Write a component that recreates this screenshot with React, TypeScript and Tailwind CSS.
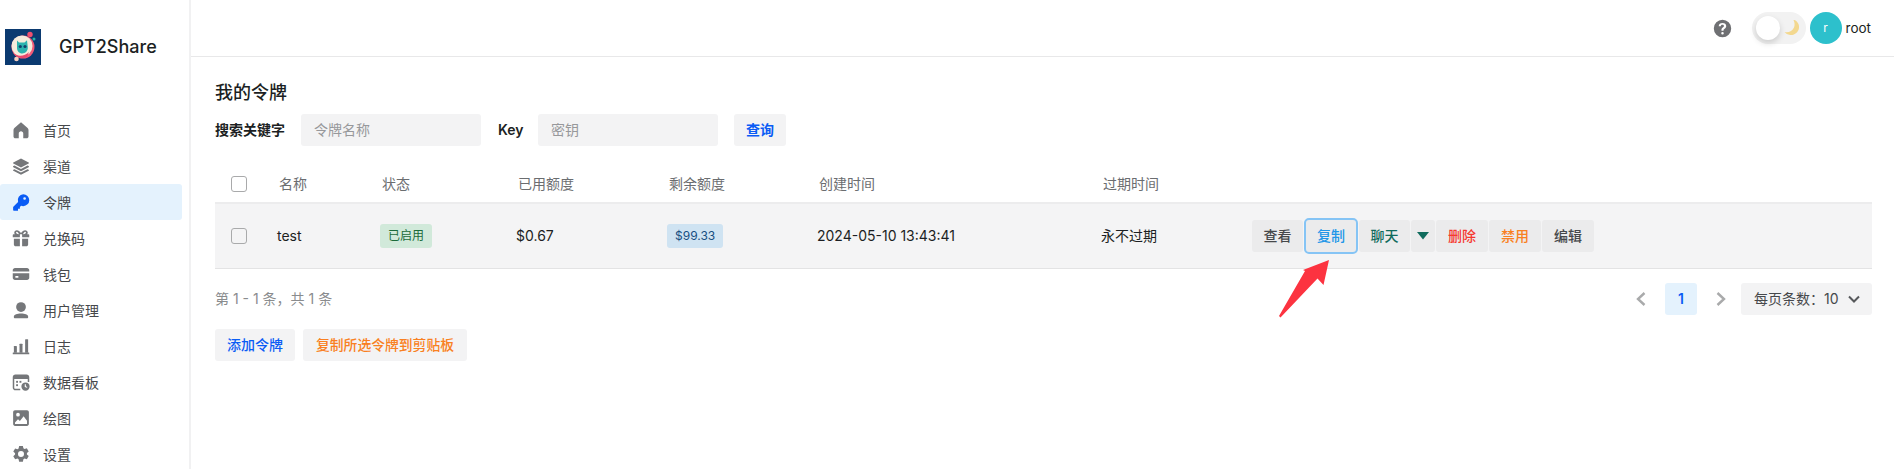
import React from "react";

function Icon({ children, size = 20, cls = "text-[#75777a]" }: { children: React.ReactNode; size?: number; cls?: string }) {
  return (
    <svg width={size} height={size} viewBox="0 0 24 24" fill="currentColor" className={`shrink-0 ${cls}`}>
      {children}
    </svg>
  );
}

const nav: { label: string; icon: React.ReactNode; active?: boolean }[] = [
  { label: "首页", icon: <path d="M12 1.500 3.200 9.400C2.400 10.100 2 11 2 12v8.500C2 21.900 3.100 23 4.500 23H9v-6.500c0-1.700 1.300-3 3-3s3 1.300 3 3V23h4.500c1.400 0 2.500-1.100 2.500-2.500V12c0-1-.4-1.900-1.200-2.600L12 1.500z" /> },
  { label: "渠道", icon: <><path d="M12 2 1.800 7.200c-.6.3-.6 1.100 0 1.400L12 14l10.200-5.400c.6-.3.6-1.100 0-1.400L12 2z" /><path d="m3.300 11.300-1.500.8c-.6.3-.6 1.100 0 1.400L12 19l10.200-5.500c.6-.3.6-1.100 0-1.400l-1.500-.8L12 16l-8.700-4.700z" /><path d="m3.300 16.200-1.500.8c-.6.3-.6 1.100 0 1.400L12 23.500l10.200-5.100c.6-.3.6-1.100 0-1.400l-1.500-.8-8.700 4.500-8.700-4.500z" /></> },
  { label: "令牌", active: true, icon: <path fillRule="evenodd" d="M15 1.500a8 8 0 0 1 0 16c-1 0-2-.2-2.900-.5L10.500 18.600V21H8v2.500H2.500c-.6 0-1-.4-1-1v-3.600c0-.3.1-.5.3-.7l6.300-6.300A8 8 0 0 1 15 1.500zm1.800 4a1.800 1.800 0 1 0 0 3.600 1.800 1.800 0 0 0 0-3.600z" /> },
  { label: "兑换码", icon: <><path fillRule="evenodd" d="M6.500 1.500c1.900 0 4 1.500 5.500 3.700 1.500-2.200 3.600-3.700 5.500-3.700C19.500 1.500 21 3 21 4.800c0 .8-.3 1.600-.7 2.200H22c.6 0 1 .4 1 1v3h-9.500V7h-3v4H1V8c0-.6.4-1 1-1h1.700c-.4-.6-.7-1.400-.7-2.200C3 3 4.500 1.500 6.500 1.500zm0 2.300c-.6 0-1.100.4-1.100 1 0 .8.700 2.200 4 2.200-1-2-2-3.200-2.900-3.200zm11 0c-.9 0-1.900 1.200-2.900 3.200 3.300 0 4-1.400 4-2.200 0-.6-.5-1-1.100-1z" /><path d="M2.500 13h8v10H5c-1.400 0-2.500-1.100-2.500-2.500V13zm11 0h8v7.500c0 1.400-1.100 2.500-2.500 2.500h-5.500V13z" /></> },
  { label: "钱包", icon: <path fillRule="evenodd" d="M4 4h16c1.700 0 3 1.300 3 3v1.500H1V7c0-1.700 1.300-3 3-3zM1 11h22v6c0 1.700-1.300 3-3 3H4c-1.700 0-3-1.300-3-3v-6zm3.500 3.500v2.500h4v-2.500h-4z" /> },
  { label: "用户管理", icon: <><circle cx="12" cy="8" r="6.500" /><path d="M2.500 20.500c0-2.500 4.500-4 9.500-4s9.500 1.500 9.500 4V22c0 .6-.4 1-1 1h-17c-.6 0-1-.4-1-1v-1.500z" /></> },
  { label: "日志", icon: <><rect x="2.500" y="12" width="4" height="9" rx=".5" /><rect x="10" y="9" width="4" height="12" rx=".5" /><rect x="17.500" y="3" width="4" height="18" rx=".5" /><rect x="1" y="20.500" width="22" height="2.500" rx=".5" /></> },
  { label: "数据看板", icon: <><path fillRule="evenodd" d="M4.500 2h15C21.400 2 23 3.600 23 5.500V12h-2V8H3v12c0 .6.400 1 1 1h7v2H4.500C2.600 23 1 21.400 1 19.500v-14C1 3.600 2.600 2 4.500 2z" /><rect x="5.500" y="10.500" width="2.500" height="2.500" /><rect x="10" y="10.500" width="2.500" height="2.500" /><rect x="5.500" y="15" width="2.500" height="2.500" /><path fillRule="evenodd" d="M18 12.500a5.500 5.500 0 1 1 0 11 5.500 5.500 0 0 1 0-11zm-1 2.500v3.500l3 1.200.5-1.200-2-.9V15H17z" /></> },
  { label: "绘图", icon: <path fillRule="evenodd" d="M4 1.500h16c1.400 0 2.500 1.100 2.500 2.500v16c0 1.400-1.100 2.500-2.500 2.500H4c-1.400 0-2.500-1.100-2.500-2.500V4C1.500 2.600 2.600 1.500 4 1.500zM8 5a2.500 2.500 0 1 0 0 5 2.500 2.500 0 0 0 0-5zm7.500 4.500-5 6.500-2.500-2.500L4 18v2h16v-4.500l-4.500-6z" /> },
  { label: "设置", icon: <path fillRule="evenodd" d="M9.500 1.200h5l.7 3.200 1.500.9 3.100-1 2.500 4.300-2.400 2.200v1.800l2.400 2.200-2.500 4.300-3.100-1-1.500.9-.7 3.300h-5l-.7-3.300-1.500-.9-3.100 1L1.700 15l2.400-2.200V11L1.700 8.800l2.500-4.300 3.100 1 1.500-.9.700-3.400zM12 8a4 4 0 1 0 0 8 4 4 0 0 0 0-8z" /> },
];

function Logo() {
  return (
    <svg width="36" height="36" viewBox="0 0 36 36" className="shrink-0">
      <rect width="36" height="36" fill="#0b3a70" />
      <circle cx="18" cy="18" r="11.500" fill="#f25a78" />
      <circle cx="17" cy="17" r="10.500" fill="#f4ecdc" />
      <path d="M12 11.500 14 13.500h5.500l2.500-2.200.8 7c.3 3.500-2.500 6.200-5.500 6.200s-5.300-2.500-5.300-5.500z" fill="#2bb3ae" />
      <circle cx="15.300" cy="17.500" r="1.600" fill="#12406b" />
      <circle cx="20" cy="17.500" r="1.600" fill="#12406b" />
      <path d="M8 24c4 4 12 3.500 16-1l-2 5c-4 2-10 1.500-14-4z" fill="#e8486c" />
      <circle cx="25" cy="5.500" r="2.700" fill="#f0506f" />
      <circle cx="29" cy="10" r="1.500" fill="#25b5a8" />
      <circle cx="11.500" cy="30" r="2.300" fill="#f6cfc0" />
    </svg>
  );
}

function ActionBtn({ label, cls, w }: { label: string; cls: string; w: string }) {
  return (
    <button className={`h-8 ${w} rounded-[3px] bg-[#ebebec] text-sm font-medium ${cls}`}>{label}</button>
  );
}

const columns = "grid grid-cols-[62px_103px_136px_151px_150px_284px_151px_1fr] items-center";

function Check() {
  return <span className="ml-[16px] block h-4 w-4 rounded-[3px] border border-[#a9aaab]" />;
}

export default function App() {
  return (
    <div
      className="relative flex h-[469px] w-[1894px] overflow-hidden bg-white text-[#1c1f23]"
      style={{ fontFamily: 'Inter, "Noto Sans CJK SC", sans-serif' }}
    >
      <aside className="flex h-full w-[191px] shrink-0 flex-col border-r-2 border-[#f1f1f2]">
        <div className="flex items-center pt-[29px] pl-[5px]">
          <Logo />
          <span className="ml-[18px] text-lg font-medium">GPT2Share</span>
        </div>
        <nav className="mt-[47px] flex flex-col">
          {nav.map((n) => (
            <div
              key={n.label}
              className={`flex h-9 w-[182px] shrink-0 items-center rounded-[3px] pl-[12px] ${n.active ? "bg-[#e4f2fd]" : ""}`}
            >
              <Icon size={18} cls={n.active ? "text-[#0a5cf5]" : "text-[#75777a]"}>{n.icon}</Icon>
              <span className="ml-[13px] text-[14px] text-[#46484b]">{n.label}</span>
            </div>
          ))}
        </nav>
      </aside>

      <main className="flex min-w-0 flex-1 flex-col">
        <header className="flex h-[57px] shrink-0 items-center justify-end border-b border-[#e8e8e9] pr-[23px]">
          <Icon size={19} cls="text-[#6f7073]">
            <path fillRule="evenodd" d="M12 1a11 11 0 1 1 0 22 11 11 0 0 1 0-22zm0 15.500a1.600 1.600 0 1 0 0 3.200 1.600 1.600 0 0 0 0-3.200zM12 5c-2.800 0-4.600 1.600-4.800 4h2.700c.1-1 .9-1.600 2-1.600s1.900.6 1.900 1.500c0 .8-.4 1.200-1.400 1.900-1.300.9-1.800 1.800-1.700 3.400v.6h2.600v-.5c0-.9.3-1.300 1.400-2.100 1.300-.9 2-2 2-3.500C16.700 6.600 14.800 5 12 5z" />
          </Icon>
          <div className="relative ml-[20px] flex h-8 w-[54px] items-center justify-end rounded-full bg-[#f2f2f2] pr-[5px]">
            <span className="absolute top-1 left-1 h-6 w-6 rounded-full bg-white shadow-[0_3px_6px_rgba(0,0,0,0.16)]" />
            <svg width="18" height="18" viewBox="0 0 18 18">
              <path d="M11.500 1c3 1.500 5 4.200 4.500 8-.6 4.300-4.500 7.500-8.800 7C4.500 15.700 2.800 14.500 1.500 13c4 .8 8-.8 9.500-4.500.9-2.500.8-5-.5-7.500z" fill="#f3d88f" />
            </svg>
          </div>
          <div className="ml-[4px] flex h-8 w-8 items-center justify-center rounded-full bg-[#2dc0cc] text-xs text-white">r</div>
          <span className="ml-[4px] text-[13.500px]">root</span>
        </header>

        <section className="flex flex-col pr-[22px] pl-[24px]">
          <h1 className="mt-[25px] h-[22px] text-lg leading-[22px] font-medium">我的令牌</h1>
          <div className="mt-[10px] flex h-8 items-center">
            <span className="w-[86px] text-[14px] leading-8 font-semibold text-[#1c1f23]">搜索关键字</span>
            <div className="flex h-8 w-[180px] items-center rounded-[3px] bg-[#f3f3f4] pl-[13px] text-sm text-[#97989b]">令牌名称</div>
            <span className="ml-[17px] w-[40px] text-sm font-semibold">Key</span>
            <div className="flex h-8 w-[180px] items-center rounded-[3px] bg-[#f3f3f4] pl-[13px] text-sm text-[#97989b]">密钥</div>
            <button className="ml-[16px] h-8 w-[52px] rounded-[3px] bg-[#f3f3f4] text-sm font-semibold text-[#0a5cf5]">查询</button>
          </div>

          <div className={`${columns} mt-[23px] h-[35px] border-b-2 border-[#ececed] pb-[4px] text-sm text-[#6b6d70]`}>
            <Check />
            <span className="pl-[2px]">名称</span>
            <span className="pl-[2px]">状态</span>
            <span className="pl-[2px]">已用额度</span>
            <span className="pl-[2px]">剩余额度</span>
            <span className="pl-[2px]">创建时间</span>
            <span className="pl-[2px]">过期时间</span>
            <span />
          </div>
          <div className={`${columns} h-[65px] border-b border-[#e3e3e4] bg-[#f4f4f5] text-sm`}>
            <Check />
            <span>test</span>
            <span><span className="inline-flex h-6 items-center rounded-[3px] bg-[#d1e9da] px-2 text-xs text-[#1b6b3a]">已启用</span></span>
            <span>$0.67</span>
            <span><span className="inline-flex h-6 items-center rounded-[3px] bg-[#cfe3f2] px-2 text-xs text-[#174f82]">$99.33</span></span>
            <span>2024-05-10 13:43:41</span>
            <span>永不过期</span>
            <div className="flex items-center gap-px">
              <ActionBtn label="查看" w="w-[51px]" cls="text-[#46484b]" />
              <button className="box-content -my-px h-8 w-[50px] rounded-[5px] border-2 border-[#85c4f5] bg-[#ebebec] text-sm font-medium text-[#2196e8]">复制</button>
              <ActionBtn label="聊天" w="w-[51px]" cls="text-[#0f6b5d]" />
              <button className="flex h-8 w-[24px] items-center justify-center rounded-[3px] bg-[#ebebec]">
                <svg width="12" height="8" viewBox="0 0 12 8"><path d="M0 0h12L6 7.500z" fill="#0f6b5d" /></svg>
              </button>
              <ActionBtn label="删除" w="w-[52px]" cls="text-[#f5372f]" />
              <ActionBtn label="禁用" w="w-[52px]" cls="text-[#f98021]" />
              <ActionBtn label="编辑" w="w-[52px]" cls="text-[#46484b]" />
            </div>
          </div>

          <div className="mt-[14px] flex h-8 items-center justify-between">
            <span className="text-sm text-[#8a8c8e]">第 1 - 1 条，共 1 条</span>
            <div className="flex items-center">
              <svg width="12" height="16" viewBox="0 0 12 16" fill="none" stroke="#a9aaab" strokeWidth="2.400"><path d="M9.500 2 3 8l6.500 6" /></svg>
              <span className="ml-[18px] flex h-8 w-8 items-center justify-center rounded-[3px] bg-[#e4f2fd] text-sm font-semibold text-[#0a5cf5]">1</span>
              <svg width="12" height="16" viewBox="0 0 12 16" fill="none" stroke="#a9aaab" strokeWidth="2.400" className="ml-[18px]"><path d="M2.500 2 9 8l-6.500 6" /></svg>
              <div className="ml-[14px] flex h-8 w-[131px] items-center justify-between rounded-[3px] bg-[#f3f3f4] pr-[12px] pl-[13px] text-sm text-[#46484b]">
                <span>每页条数：10</span>
                <svg width="12" height="8" viewBox="0 0 12 8" fill="none" stroke="#56585b" strokeWidth="2"><path d="m1 1.500 5 5 5-5" /></svg>
              </div>
            </div>
          </div>

          <div className="mt-[14px] flex gap-2">
            <button className="h-8 w-[80px] rounded-[3px] bg-[#f3f3f4] text-sm font-medium text-[#0a5cf5]">添加令牌</button>
            <button className="h-8 w-[164px] rounded-[3px] bg-[#f3f3f4] text-[13.800px] font-medium text-[#f98021]">复制所选令牌到剪贴板</button>
          </div>
        </section>
      </main>

      <svg width="60" height="65" viewBox="0 0 60 65" className="absolute top-[257px] left-[1275px]">
        <path d="M54 3 48.500 28 42.500 21.500 5.500 60.500 4 59 30 14 28 13z" fill="#fc3340" />
      </svg>
    </div>
  );
}
